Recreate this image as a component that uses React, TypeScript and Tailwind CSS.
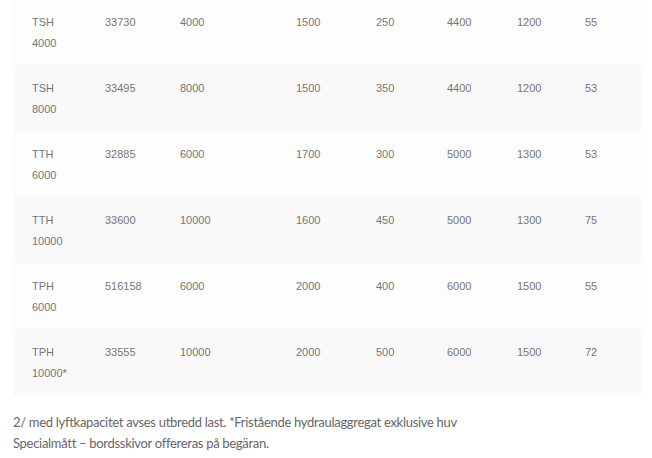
import React from "react";

const rows: string[][] = [
  ["TSH 4000", "33730", "4000", "1500", "250", "4400", "1200", "55"],
  ["TSH 8000", "33495", "8000", "1500", "350", "4400", "1200", "53"],
  ["TTH 6000", "32885", "6000", "1700", "300", "5000", "1300", "53"],
  ["TTH 10000", "33600", "10000", "1600", "450", "5000", "1300", "75"],
  ["TPH 6000", "516158", "6000", "2000", "400", "6000", "1500", "55"],
  ["TPH 10000*", "33555", "10000", "2000", "500", "6000", "1500", "72"],
];

export default function App() {
  return (
    <div className="w-[652px] h-[458px] overflow-hidden bg-white">
      <div className="mx-[13px] mt-[-1px] w-[628px]">
        {rows.map((r, i) => (
          <div
            key={i}
            className={`grid grid-cols-[73px_75px_116px_80px_71px_70px_68px_75px] h-[66px] pt-[13px] text-[11px] leading-[21px] text-[#767676] ${
              i % 2 === 0 ? "bg-[#fdfdfd]" : "bg-[#f9f9f9]"
            }`}
            style={{ fontFamily: '"Liberation Sans", Arial, sans-serif' }}
          >
            {r.map((c, j) => (
              <div key={j} className={j === 0 ? "pl-[19px] pr-[14px]" : "pl-[19px]"}>
                {c}
              </div>
            ))}
          </div>
        ))}
      </div>
      <div
        className="mx-[13px] mt-[17px] text-[13px] leading-[21px] tracking-[-0.3px] text-[#666666]"
        style={{ fontFamily: 'Lato, "Open Sans", sans-serif' }}
      >
        <p>2/ med lyftkapacitet avses utbredd last. *Fristående hydraulaggregat exklusive huv</p>
        <p>Specialmått – bordsskivor offereras på begäran.</p>
      </div>
    </div>
  );
}
